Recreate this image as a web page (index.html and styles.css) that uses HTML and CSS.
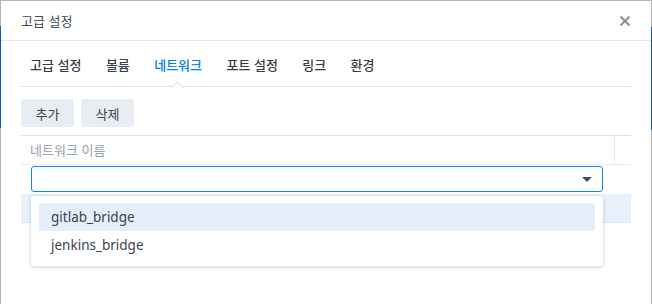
FILE: index.html
```html
<!DOCTYPE html>
<html lang="ko">
<head>
<meta charset="utf-8">
<link rel="stylesheet" href="styles.css">
</head>
<body>
<div class="edge edge-left"></div>
<div class="edge edge-right"></div>
<div class="dialog">
  <div class="header">
    <span class="title">고급 설정</span>
    <svg class="close" width="12" height="12" viewBox="0 0 12 12"><path d="M1.5 1.5L10.5 10.5M10.5 1.5L1.5 10.5" stroke="#8d939b" stroke-width="2.2" stroke-linecap="butt"/></svg>
  </div>
  <div class="body">
    <div class="tabs">
      <span class="tab">고급 설정</span>
      <span class="tab">볼륨</span>
      <span class="tab active">네트워크</span>
      <span class="tab">포트 설정</span>
      <span class="tab">링크</span>
      <span class="tab">환경</span>
    </div>
    <div class="toolbar">
      <button class="btn">추가</button>
      <button class="btn">삭제</button>
    </div>
    <div class="grid">
      <div class="grid-head">
        <div class="col-name">네트워크 이름</div>
        <div class="col-extra"></div>
      </div>
      <div class="grid-row edit">
        <div class="combo">
          <svg class="arrow" width="10" height="6" viewBox="0 0 10 6"><path d="M0 0H10L5 5Z" fill="#4a5058"/></svg>
        </div>
      </div>
      <div class="grid-row selected"></div>
      <div class="menu">
        <div class="item hover">gitlab_bridge</div>
        <div class="item">jenkins_bridge</div>
      </div>
    </div>
  </div>
</div>
</body>
</html>
```

FILE: styles.css
```css
html, body {
  margin: 0;
  padding: 0;
}
body {
  width: 652px;
  height: 304px;
  background: #b6b6b6;
  position: relative;
  overflow: hidden;
  font-family: "Noto Sans", "Noto Sans CJK KR", sans-serif;
  color: #343b45;
}
.edge {
  position: absolute;
  width: 2px;
  background: #0b5fa8;
}
.edge-left { left: 0; top: 26px; height: 102px; width: 1px; }
.edge-right { right: 0; top: 27px; height: 103px; }
.dialog {
  position: relative;
  margin: 1px 1px 0 1px;
  height: 303px;
  background: #fff;
}
.header {
  height: 39px;
  border-bottom: 1px solid #e3e8ee;
  display: flex;
  align-items: center;
  justify-content: space-between;
  padding: 0 20px 0 20px;
}
.title {
  font-family: "Noto Sans CJK KR", sans-serif;
  font-size: 13px;
  color: #414953;
}
.close { margin-top: 1px; }
.body {
  padding: 0 20px;
}
.tabs {
  display: flex;
  height: 45px;
  align-items: center;
  padding: 0 0 0 9px;
  border-bottom: 1px solid #d9e1ea;
  position: relative;
}
.tab {
  font-family: "Noto Sans CJK KR", sans-serif;
  font-size: 13px;
  font-weight: 500;
  color: #353c46;
  position: relative;
  padding-top: 1px;
  margin-right: 24.4px;
}
.tab.active {
  color: #0a80e0;
}
.tab.active::after {
  content: "";
  position: absolute;
  left: 50%;
  bottom: -18px;
  width: 8px;
  height: 8px;
  margin-left: -5px;
  background: #fff;
  border-left: 1px solid #d9e1ea;
  border-top: 1px solid #d9e1ea;
  transform: rotate(45deg);
}
.toolbar {
  display: flex;
  gap: 7px;
  padding-top: 12px;
  height: 28px;
  padding-bottom: 8px;
}
.btn {
  font-family: "Noto Sans CJK KR", sans-serif;
  font-size: 13px;
  color: #3c434c;
  background: #e8edf3;
  border: none;
  border-radius: 3px;
  width: 53px;
  height: 28px;
  padding: 0;
}
.grid {
  position: relative;
  border-top: 1px solid #d9e1ea;
}
.grid-head {
  display: flex;
  height: 28px;
  border-bottom: 1px solid #e6ebf0;
}
.col-name {
  flex: 1;
  font-family: "Noto Sans CJK KR", sans-serif;
  font-size: 13px;
  color: #9aa0a7;
  padding-left: 9px;
  line-height: 27px;
  border-right: 1px solid #e6ebf0;
}
.col-extra {
  width: 16px;
}
.grid-row.edit {
  height: 28px;
  padding: 1px 0 0 10px;
}
.combo {
  width: 570px;
  height: 24px;
  border: 1px solid #1185e6;
  border-radius: 3px;
  position: relative;
}
.arrow {
  position: absolute;
  right: 10px;
  top: 10px;
}
.grid-row.selected {
  height: 28px;
  background: #e7f1fc;
  border-bottom: 1px solid #dde7f1;
}
.menu {
  position: absolute;
  left: 10px;
  top: 60px;
  width: 556px;
  padding: 7px 8px;
  background: #fff;
  border-radius: 3px;
  box-shadow: 0 1px 4px rgba(0,0,0,0.2);
}
.item {
  height: 28px;
  line-height: 28px;
  padding-left: 12px;
  font-size: 13.5px;
  color: #3b424b;
  border-radius: 2px;
}
.item.hover {
  background: #e4effb;
}
```
